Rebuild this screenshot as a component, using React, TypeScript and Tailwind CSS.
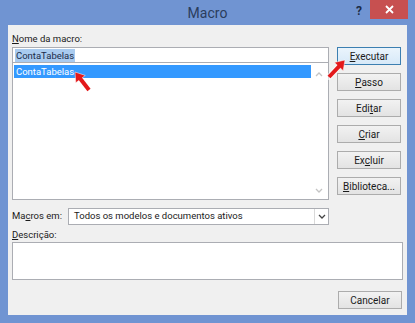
import React from "react";

const font = { fontFamily: 'Roboto, "Noto Sans", "DejaVu Sans", sans-serif' };

function U({ children }: { children: React.ReactNode }) {
  return <span className="underline underline-offset-1">{children}</span>;
}

function Btn({ children, primary }: { children: React.ReactNode; primary?: boolean }) {
  return (
    <div
      className={
        "h-[18px] w-[64px] flex items-center justify-center text-[10px] text-[#1a1a1a] border " +
        (primary
          ? "border-[#3c7fb1] bg-gradient-to-b from-[#eaf4fc] to-[#d7e9f8]"
          : "border-[#acacac] bg-gradient-to-b from-[#f2f2f2] to-[#e3e3e3]")
      }
    >
      {children}
    </div>
  );
}

function Arrow({ x1, y1, x2, y2 }: { x1: number; y1: number; x2: number; y2: number }) {
  // tail (x1,y1) -> tip (x2,y2)
  const a = Math.atan2(y2 - y1, x2 - x1);
  const len = 9;
  const w = 6;
  const bx = x2 - Math.cos(a) * len;
  const by = y2 - Math.sin(a) * len;
  const px = -Math.sin(a);
  const py = Math.cos(a);
  const pts = `${x2},${y2} ${bx + px * w},${by + py * w} ${bx - px * w},${by - py * w}`;
  return (
    <g>
      <line x1={x1} y1={y1} x2={bx} y2={by} stroke="#ffffff" strokeWidth={6} strokeLinecap="round" opacity={0.6} />
      <polygon points={pts} fill="#e3191b" stroke="#ffffff" strokeWidth={1} strokeOpacity={0.5} />
      <line x1={x1} y1={y1} x2={bx + Math.cos(a)} y2={by + Math.sin(a)} stroke="#e3191b" strokeWidth={4} />
    </g>
  );
}

export default function App() {
  return (
    <div className="relative w-[415px] h-[323px] bg-[#7094d2] flex flex-col px-[8px] pb-[8px]" style={font}>
      {/* Title bar */}
      <div className="relative h-[25px] flex items-center justify-center">
        <span className="text-[14px] text-[#2b3d5c] mt-[2px]">Macro</span>
        <span className="absolute left-[348px] top-[2px] text-[12px] font-bold text-[#1c2c48]">?</span>
        <div className="absolute left-[362px] top-0 w-[38px] h-[19px] bg-[#c75050] flex items-center justify-center">
          <svg width="9" height="9" viewBox="0 0 9 9">
            <path d="M1 1 L8 8 M8 1 L1 8" stroke="#ffffff" strokeWidth="1.8" />
          </svg>
        </div>
      </div>

      {/* Client area */}
      <div className="flex-1 bg-[#f0f0f0] flex flex-col pl-[4px] pr-[5px] pt-[8px] text-[9.5px]">
        <div className="flex gap-[8px]">
          {/* Left column */}
          <div className="w-[317px] flex flex-col">
            <div className="h-[14px] leading-[12px] text-[#1a1a1a]">
              <U>N</U>ome da macro:
            </div>
            <div className="h-[16px] bg-white border border-[#abadb3] flex items-center px-[2px]">
              <span className="leading-[13px] bg-[#a9cbef] text-[#1b2c4a] px-[1px]">ContaTabelas</span>
            </div>
            <div className="h-[137px] bg-white border border-[#abadb3] border-t-0 flex p-[1px]">
              <div className="flex-1">
                <div className="h-[13px] bg-[#3399ff] text-white leading-[13px] px-[2px] mt-[1px]">ContaTabelas</div>
              </div>
              <div className="w-[16px] flex flex-col items-center justify-between pt-[8px] pb-[5px]">
                <svg width="8" height="5" viewBox="0 0 8 5">
                  <path d="M1 4 L4 1 L7 4" stroke="#c4c4c4" strokeWidth="1.3" fill="none" />
                </svg>
                <svg width="8" height="5" viewBox="0 0 8 5">
                  <path d="M1 1 L4 4 L7 1" stroke="#c4c4c4" strokeWidth="1.3" fill="none" />
                </svg>
              </div>
            </div>
            <div className="mt-[8px] h-[17px] flex items-center">
              <span className="w-[56px] text-[#1a1a1a]">
                Ma<U>c</U>ros em:
              </span>
              <div className="flex-1 h-[17px] bg-white border border-[#abadb3] flex items-center">
                <span className="flex-1 text-[#1a1a1a] pl-[5px]">Todos os modelos e documentos ativos</span>
                <div className="w-[14px] h-full border-l border-[#d9d9d9] flex items-center justify-center">
                  <svg width="8" height="5" viewBox="0 0 8 5">
                    <path d="M1 1 L4 4 L7 1" stroke="#444444" strokeWidth="1.3" fill="none" />
                  </svg>
                </div>
              </div>
            </div>
          </div>

          {/* Button column */}
          <div className="flex flex-col gap-[8px] pt-[14px]">
            <Btn primary>
              <U>E</U>xecutar
            </Btn>
            <Btn>
              <U>P</U>asso
            </Btn>
            <Btn>
              Edi<U>t</U>ar
            </Btn>
            <Btn>
              <U>C</U>riar
            </Btn>
            <Btn>
              Ex<U>c</U>luir
            </Btn>
            <Btn>
              <U>B</U>iblioteca...
            </Btn>
          </div>
        </div>

        <div className="mt-[4px] h-[13px] leading-[12px] text-[#1a1a1a]">
          <U>D</U>escrição:
        </div>
        <div className="w-[391px] h-[38px] bg-white border border-[#abadb3]" />
        <div className="mt-[11px] flex justify-end w-[390px]">
          <Btn>Cancelar</Btn>
        </div>
      </div>

      {/* Annotation arrows */}
      <svg className="absolute left-0 top-0 pointer-events-none" width="415" height="323">
        <Arrow x1={89} y1={90} x2={75} y2={72} />
        <Arrow x1={329} y1={77} x2={345} y2={60} />
      </svg>
    </div>
  );
}
